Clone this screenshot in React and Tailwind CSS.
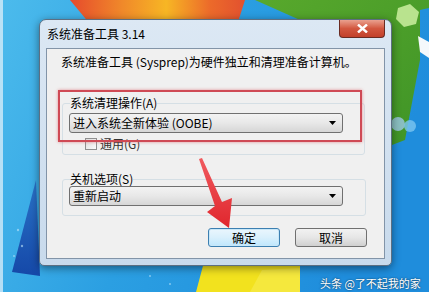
import React from "react";

const font = { fontFamily: '"Noto Sans CJK SC", "Liberation Sans", sans-serif' };

const Wallpaper = () => (
  <svg className="absolute inset-0" width="429" height="292" viewBox="0 0 429 292">
    <defs>
      <linearGradient id="sky" x1="0" y1="0" x2="1" y2="0.3">
        <stop offset="0" stopColor="#4cbbec" />
        <stop offset="0.5" stopColor="#2b9fe2" />
        <stop offset="1" stopColor="#1f8ddc" />
      </linearGradient>
      <linearGradient id="flame" x1="0" y1="0" x2="1" y2="0">
        <stop offset="0" stopColor="#e64a2c" />
        <stop offset="0.3" stopColor="#f0892a" />
        <stop offset="0.55" stopColor="#f7b624" />
        <stop offset="0.8" stopColor="#ec6a2a" />
        <stop offset="1" stopColor="#e2512f" />
      </linearGradient>
      <linearGradient id="leaf" x1="0" y1="0" x2="1" y2="1">
        <stop offset="0" stopColor="#58a82c" />
        <stop offset="1" stopColor="#3f9427" />
      </linearGradient>
      <linearGradient id="dark" x1="0" y1="0" x2="0" y2="1">
        <stop offset="0" stopColor="#2a73c8" />
        <stop offset="1" stopColor="#1548a8" />
      </linearGradient>
    </defs>
    <rect width="429" height="292" fill="url(#sky)" />
    <path d="M70 0 L245 0 L238 22 L90 24 Z" fill="url(#flame)" />
    <path d="M255 0 L429 0 L429 8 L420 10 L420 60 L405 140 L392 145 L300 20 Z" fill="url(#leaf)" />
    <polygon points="398,8 410,4 419,12 416,24 404,27 396,19" fill="#b9e38e" />
    <path d="M418 36 L429 42 L429 58 L420 52 Z" fill="#f4f8fb" />
    <circle cx="398" cy="124" r="7" fill="#9cc8e6" opacity="0.8" />
    <circle cx="410" cy="126" r="6" fill="#7cc5f0" opacity="0.8" />
    <path d="M36 180 L12 272 L40 276 Z" fill="url(#dark)" />
    <path d="M196 292 L204 262 L300 262 L300 292 Z" fill="#f2e21e" />
    <path d="M250 292 L262 270 L300 268 L300 292 Z" fill="#f6ec52" opacity="0.6" />
    <path d="M0 0 L3 0 L3 292 L0 292 Z" fill="#e8f4fb" opacity="0.7" />
    <g fill="#bfe6fb" opacity="0.6">
      <circle cx="18" cy="230" r="1.2" />
      <circle cx="22" cy="246" r="1.2" />
      <circle cx="14" cy="256" r="1" />
      <circle cx="150" cy="276" r="1" />
      <circle cx="170" cy="284" r="1" />
    </g>
  </svg>
);

const Combo = ({ text }) => (
  <div className="flex h-[20px] w-[274px] items-center justify-between rounded-[3px] border border-[#707070] bg-gradient-to-b from-[#f3f3f3] via-[#e8e8e8] to-[#d6d6d6] pl-[3px] pr-[6px] text-[12px] leading-none text-black">
    <span>{text}</span>
    <svg width="7" height="4" viewBox="0 0 7 4">
      <path d="M0 0 H7 L3.5 4 Z" fill="#000" />
    </svg>
  </div>
);

export default function App() {
  return (
    <div className="relative h-[292px] w-[429px] overflow-hidden" style={font}>
      <Wallpaper />

      {/* dialog window */}
      <div className="absolute left-[39px] top-[19px] flex h-[247px] w-[353px] flex-col rounded-t-[7px] rounded-b-[5px] border border-[#5d6f82] bg-gradient-to-b from-[#dce8f4] to-[#c8daec] shadow-[0_2px_8px_rgba(0,0,0,0.45)]">
        <div className="relative flex h-[28px] items-center pl-[7px]">
          <span className="text-[12px] text-black">系统准备工具 3.14</span>
          <div className="absolute right-[6px] top-0 flex h-[18px] w-[46px] items-center justify-center rounded-b-[4px] border border-t-0 border-[#6a2b22] bg-gradient-to-b from-[#e9a08f] via-[#d2573f] to-[#c2402a]">
            <svg width="11" height="9" viewBox="0 0 11 9">
              <path d="M1 0.5 L10 8.5 M10 0.5 L1 8.5" stroke="#fff" strokeWidth="2.4" />
            </svg>
          </div>
        </div>

        <div className="relative mx-[6px] h-[211px] border border-[#8294a8] bg-[#f0f0f0] text-[12px] text-black">
          <div className="pl-[14px] pt-[5px] leading-[16px]">
            系统准备工具 (Sysprep)为硬件独立和清理准备计算机。
          </div>

          <div className="ml-[15px] mt-[33px] h-[52px] w-[303px] rounded-[3px] border border-[#d5dfe5]">
            <div className="-mt-[9px] ml-[7px] w-fit bg-[#f0f0f0] leading-[16px]">系统清理操作(A)</div>
            <div className="ml-[6px] mt-[2px]">
              <Combo text="进入系统全新体验 (OOBE)" />
            </div>
            <div className="ml-[22px] mt-[4px] flex items-center gap-[3px] leading-[13px]">
              <div className="h-[12px] w-[12px] border border-[#8f8f8f] bg-gradient-to-br from-[#dcdcdc] to-[#fbfbfb]" />
              <span className="text-[#333]">通用(G)</span>
            </div>
          </div>

          <div className="ml-[15px] mt-[24px] h-[37px] w-[304px] rounded-[3px] border border-[#d5dfe5]">
            <div className="-mt-[8px] ml-[7px] w-fit bg-[#f0f0f0] leading-[14px]">关机选项(S)</div>
            <div className="ml-[6px] mt-0">
              <Combo text="重新启动" />
            </div>
          </div>

          <div className="ml-[161px] mt-[12px] flex gap-[15px]">
            <div className="flex h-[19px] w-[72px] items-center justify-center rounded-[3px] border border-[#3c7fb1] bg-gradient-to-b from-[#eaf6fd] via-[#d9f0fc] to-[#bee6fd] shadow-[inset_0_0_0_1px_#c8e7f8]">
              确定
            </div>
            <div className="flex h-[19px] w-[72px] items-center justify-center rounded-[3px] border border-[#707070] bg-gradient-to-b from-[#f2f2f2] via-[#e6e6e6] to-[#d0d0d0]">
              取消
            </div>
          </div>

          {/* red highlight */}
          <div className="absolute left-[11px] top-[41px] h-[52px] w-[304px] border-2 border-[#cf4a55] shadow-[0_0_3px_rgba(220,80,90,0.6)]" />
        </div>
      </div>

      {/* red arrow */}
      <svg className="absolute inset-0" width="429" height="292" viewBox="0 0 429 292">
        <defs>
          <linearGradient id="arrow" x1="0" y1="0" x2="0" y2="1">
            <stop offset="0" stopColor="#f05a5e" />
            <stop offset="1" stopColor="#e0262d" />
          </linearGradient>
        </defs>
        <polygon
          points="199,159 202,158 222,202 232,198 229,228 207,212 215,206"
          fill="url(#arrow)"
        />
      </svg>

      <div className="absolute left-[320px] top-[276px] text-[11px] leading-[14px] text-white [text-shadow:0_0_2px_rgba(0,0,0,0.7)]">
        头条 @了不起我的家
      </div>
    </div>
  );
}
